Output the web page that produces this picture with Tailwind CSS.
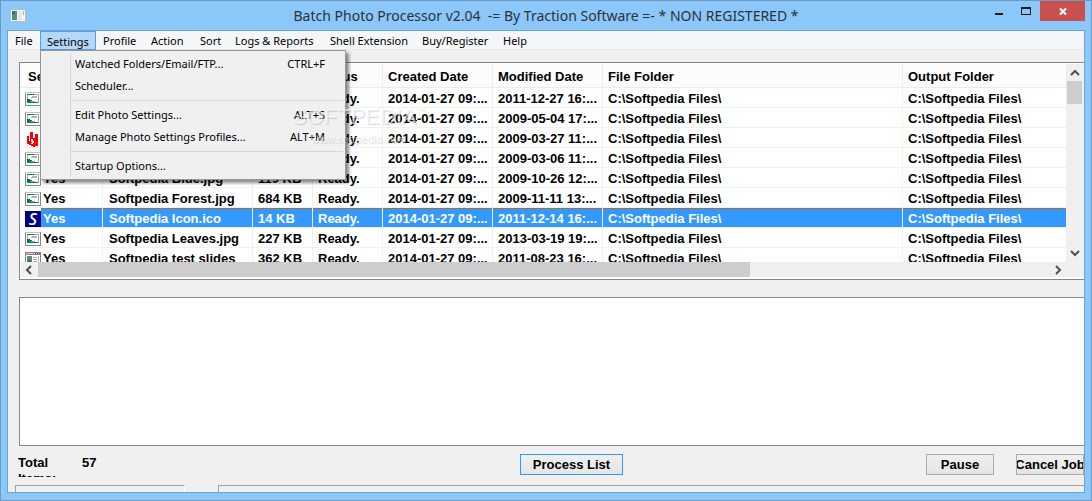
<!DOCTYPE html>
<html lang="en">
<head>
  <meta charset="UTF-8" />
  <meta name="viewport" content="width=device-width, initial-scale=1.0" />
  <title>Batch Photo Processor</title>
  <script src="https://cdn.jsdelivr.net/npm/@tailwindcss/browser@4"></script>
</head>
<body class="h-screen overflow-hidden bg-[#8cc7fa] font-['Noto_Sans',sans-serif] text-black">
  <div class="flex h-full flex-col border border-[#6b9ac3] px-[6px] pb-[7px]">
    <!-- title bar -->
    <header class="grid h-[29px] shrink-0 grid-cols-[1fr_auto_1fr] items-center">
      <svg class="ml-[3px] h-4 w-4" viewBox="0 0 16 16" shape-rendering="crispEdges">
        <path fill="#b8bcbe" d="M0 1h16v13H0z" />
        <path fill="#f4f6f7" d="M1 2h14v11H1z" />
        <path fill="#4d9684" d="M2 3h5v9H2z" />
        <path fill="#2f7488" d="M2 3h3v4H2z" />
        <path fill="#dfe9ea" d="M8 3h4v9H8z" />
        <path fill="#8fc1a4" d="M13 3h1v4h-1z" />
      </svg>
      <h1 class="text-[14px] whitespace-pre text-[#28323c]">Batch Photo Processor v2.04  -= By Traction Software =- * NON REGISTERED *</h1>
      <div class="flex justify-end self-start">
        <button aria-label="Minimize" class="h-5 w-[27px]"><svg class="h-5 w-[27px]" viewBox="0 0 27 20"><path fill="#1e1e1e" d="M9 12h8v2H9z" /></svg></button>
        <button aria-label="Maximize" class="h-5 w-[27px]"><svg class="h-5 w-[27px]" viewBox="0 0 27 20" shape-rendering="crispEdges"><path fill="#1e1e1e" fill-rule="evenodd" d="M8 6h10v8H8zM9 8v5h8V8z" /></svg></button>
        <button aria-label="Close" class="h-5 w-[45px] bg-[#c75050]"><svg class="h-5 w-[45px]" viewBox="0 0 45 20"><path fill="none" stroke="#fff" stroke-width="2" d="M20 7.500l6 6M26 7.500l-6 6" /></svg></button>
      </div>
    </header>

    <main class="relative flex min-h-0 flex-1 flex-col overflow-hidden border border-[#6ba3d6] bg-[#f0f0f0]">
      <!-- menu bar -->
      <nav class="relative z-10 flex h-[19px] shrink-0 border-b border-[#e8e8e8] bg-[#f5f6f7] text-[11px]">
        <button class="h-[19px] w-8 pt-[2px] pl-[7px] text-left whitespace-nowrap">File</button>
        <div class="relative">
          <button class="h-[19px] w-14 border border-[#569de5] bg-[#b5d7f8] pt-[2px] pl-[6px] text-left whitespace-nowrap">Settings</button>
          <ul class="absolute top-[19px] left-0 w-[306px] border border-[#979797] bg-[#f0f0f0] bg-[linear-gradient(#d7d7d7,#d7d7d7)] bg-[length:1px_calc(100%-4px)] bg-[position:29px_2px] bg-no-repeat py-[2px] shadow-[3px_3px_3px_rgba(0,0,0,0.45)]">
            <li><button class="flex h-[22px] w-full items-center justify-between pr-5 pl-[34px]"><span>Watched Folders/Email/FTP...</span><span>CTRL+F</span></button></li>
            <li><button class="flex h-[22px] w-full items-center justify-between pr-5 pl-[34px]"><span>Scheduler...</span></button></li>
            <li class="my-[3px] mr-[2px] ml-[30px] h-px bg-[#d7d7d7]"></li>
            <li><button class="flex h-[22px] w-full items-center justify-between pr-5 pl-[34px]"><span>Edit Photo Settings...</span><span>ALT+S</span></button></li>
            <li><button class="flex h-[22px] w-full items-center justify-between pr-5 pl-[34px]"><span>Manage Photo Settings Profiles...</span><span>ALT+M</span></button></li>
            <li class="my-[3px] mr-[2px] ml-[30px] h-px bg-[#d7d7d7]"></li>
            <li><button class="flex h-[22px] w-full items-center justify-between pr-5 pl-[34px]"><span>Startup Options...</span></button></li>
          </ul>
        </div>
        <button class="h-[19px] w-12 pt-[2px] pl-[7px] text-left whitespace-nowrap">Profile</button>
        <button class="h-[19px] w-12 pt-[2px] pl-[7px] text-left whitespace-nowrap">Action</button>
        <button class="h-[19px] w-9 pt-[2px] pl-[8px] text-left whitespace-nowrap">Sort</button>
        <button class="h-[19px] w-[95px] pt-[2px] pl-[7px] text-left whitespace-nowrap">Logs &amp; Reports</button>
        <button class="h-[19px] w-[92px] pt-[2px] pl-[7px] text-left whitespace-nowrap">Shell Extension</button>
        <button class="h-[19px] w-[81px] pt-[2px] pl-[7px] text-left whitespace-nowrap">Buy/Register</button>
        <button class="h-[19px] pt-[2px] pl-[7px] text-left whitespace-nowrap">Help</button>
      </nav>

      <!-- file list -->
      <section class="mt-3 ml-[11px] flex h-[218px] shrink-0 flex-col border border-r-0 border-[#828790] bg-white py-px pb-[2px] pl-px font-['Liberation_Sans',Arial,sans-serif] text-[13px] font-bold">
        <div class="flex min-h-0 flex-1">
          <div class="min-w-0 flex-1 overflow-hidden">
            <table class="w-full table-fixed border-separate border-spacing-0">
              <colgroup>
                <col class="w-[82px]" /><col class="w-[150px]" /><col class="w-[60px]" /><col class="w-[70px]" />
                <col class="w-[110px]" /><col class="w-[110px]" /><col class="w-[300px]" /><col />
              </colgroup>
              <thead>
                <tr class="h-6 bg-[#fcfcfc] text-left leading-4 *:border-r *:border-b *:border-[#e3ecf7] *:pt-[2px] *:pl-[5px]">
                  <th><span class="pl-[2px]">Selected</span></th><th>Name</th><th>Size</th><th>Status</th><th>Created Date</th><th>Modified Date</th><th>File Folder</th><th>Output Folder</th>
                </tr>
              </thead>
              <tbody id="rows"></tbody>
            </table>
          </div>
          <div class="flex w-[17px] shrink-0 flex-col bg-[#f0f0f0]">
            <svg class="h-[17px] w-4 shrink-0" viewBox="0 0 16 17"><path fill="none" stroke="#505050" stroke-width="2" d="M4 11l4-4 4 4" /></svg>
            <div class="h-[23px] w-[15px] bg-[#cdcdcd]"></div>
            <svg class="mt-auto h-[17px] w-4 shrink-0" viewBox="0 0 16 17"><path fill="none" stroke="#505050" stroke-width="2" d="M4 6l4 4 4-4" /></svg>
          </div>
        </div>
        <div class="flex h-[15px] shrink-0 bg-[#f0f0f0]">
          <svg class="h-[15px] w-[17px] shrink-0" viewBox="0 0 17 15"><path fill="none" stroke="#505050" stroke-width="2" d="M10 4L6 8l4 4" /></svg>
          <div class="w-[67%] bg-[#cdcdcd]"></div>
          <svg class="mr-[17px] ml-auto h-[15px] w-[17px] shrink-0" viewBox="0 0 17 15"><path fill="none" stroke="#505050" stroke-width="2" d="M6 4l4 4-4 4" /></svg>
        </div>
      </section>

      <!-- log -->
      <textarea aria-label="Log" class="mt-[17px] ml-[11px] block min-h-0 flex-1 resize-none border border-r-0 border-[#828790] bg-white"></textarea>

      <footer class="flex h-[39px] shrink-0 items-start font-['Liberation_Sans',Arial,sans-serif] text-[13px] font-bold">
        <div class="mt-[9px] ml-[10px] h-[22px] w-16 overflow-hidden leading-4">Total<br />Items:</div>
        <div class="mt-[9px] leading-4">57</div>
        <button class="mt-2 ml-auto h-[21px] w-[103px] border border-[#3399ff] bg-linear-to-b from-[#f0f0f0] to-[#e5e5e5]">Process List</button>
        <button class="mt-2 ml-[303px] h-[21px] w-[68px] border border-[#acacac] bg-linear-to-b from-[#f0f0f0] to-[#e5e5e5]">Pause</button>
        <button class="mt-2 ml-[22px] flex h-[21px] w-[68px] items-center justify-center overflow-hidden border border-[#acacac] bg-linear-to-b from-[#f0f0f0] to-[#e5e5e5] whitespace-nowrap">Cancel Job</button>
      </footer>
      <div class="flex h-[7px] shrink-0 pl-[7px]">
        <div class="w-[170px] border border-b-0 border-[#a0a0a0] border-r-white"></div>
        <div class="ml-[33px] flex-1 border-t border-l border-[#a0a0a0]"></div>
      </div>

      <!-- watermark over the list -->
      <div class="pointer-events-none absolute top-[74px] left-[284px] z-20 text-center font-['Liberation_Sans',Arial,sans-serif] text-white/60 [text-shadow:1px_1px_1px_rgba(0,0,0,0.15)]">
        <div class="flex items-start text-[22px] leading-6">SOFTPEDIA<span class="text-[8px] leading-3">™</span></div>
        <div class="text-[11px] leading-5">www.softpedia.com</div>
      </div>
    </main>
  </div>

  <script>
    const icons = {
      image: `<path fill="#868686" d="M0 1h16v14H0z"/><path fill="#c4c4c4" d="M0 1h15v1H0z"/><path fill="#fff" d="M1 2h14v12H1z"/>
        <path fill="#a8a8a8" d="M2 3h12v9H2z"/><path fill="#fff" d="M3 4h10v7H3z"/><path fill="#008080" d="M2 3h7v1H2z"/>
        <path fill="#b4b4b4" d="M7 5h5v1H7zM6 6h6v1H6z"/><path fill="#008080" d="M2 9h5v1h2v1h4v1H2z"/><path fill="#008000" d="M2 8h3v3H2z"/><path fill="#a0a0a0" d="M6 10h4v1H6z"/>`,
      red: '<path fill="#f00" d="M2 5h2v5h1V1h3v6h2V3h3v12h-3l-1 1-3-1-1-1-3-1z"/><path fill="#fff" d="M6 8h2v2h1v2l-2 1H6v-1l1-1H6z"/>',
      s: '<path fill="#000080" d="M0 0h16v16H0z"/><text x="8" y="14" text-anchor="middle" fill="#fff" font-family="Open Sans" font-size="16" font-weight="600" font-style="italic">S</text>',
      window: `<path fill="#868686" d="M0 1h16v15H0z"/><path fill="#c4c4c4" d="M1 2h14v1H1z"/><path fill="#505050" d="M10 2h1v1h-1zM12 2h1v1h-1zM14 2h1v1h-1z"/>
        <path fill="#fff" d="M1 4h14v12H1z"/><path fill="#808080" d="M2 5h5v7H2z"/><path fill="#008080" d="M3 9h3v2H3z"/><path fill="#b0b0b0" d="M8 6h4v1H8zM8 8h4v1H8zM8 10h4v1H8zM13 5h1v9h-1z"/>`
    };
    const files = [
      ['image', 'Softpedia Abstract.jpg', '210 KB', '2011-12-27 16:...'],
      ['image', 'Softpedia Animal.jpg', '152 KB', '2009-05-04 17:...'],
      ['red', 'Softpedia Archive.psd', '98 KB', '2009-03-27 11:...'],
      ['image', 'Softpedia Beach.jpg', '305 KB', '2009-03-06 11:...'],
      ['image', 'Softpedia Blue.jpg', '119 KB', '2009-10-26 12:...'],
      ['image', 'Softpedia Forest.jpg', '684 KB', '2009-11-11 13:...'],
      ['s', 'Softpedia Icon.ico', '14 KB', '2011-12-14 16:...'],
      ['image', 'Softpedia Leaves.jpg', '227 KB', '2013-03-19 19:...'],
      ['window', 'Softpedia test slides', '362 KB', '2011-08-23 16:...']
    ];
    document.getElementById('rows').innerHTML = files.map(([icon, name, size, modified]) => {
      const cells = [size, 'Ready.', '2014-01-27 09:...', modified, 'C:\\Softpedia Files\\', 'C:\\Softpedia Files\\'];
      const look = icon === 's' ? 'bg-[#3399ff] text-white *:bg-[repeating-linear-gradient(90deg,#c86400_0_1px,#8a7a60_1px_2px)] *:bg-[length:100%_1px] *:bg-no-repeat' : '';
      return `<tr class="h-5 leading-[17px] *:h-5 *:border-r *:border-b *:border-[#f0f0f0] ${look}">
        <td><span class="flex h-[19px] items-center bg-[linear-gradient(#fff,#fff)] bg-[length:20px_100%] bg-no-repeat pt-[2px]"><svg class="ml-1 h-4 w-4 shrink-0" viewBox="0 0 16 16" shape-rendering="crispEdges">${icons[icon]}</svg><span class="pl-[2px]">Yes</span></span></td>
        <td class="truncate pt-[2px] pl-[6px]">${name}</td>
        ${cells.map(c => `<td class="truncate pt-[2px] pl-[5px]">${c}</td>`).join('')}
      </tr>`;
    }).join('');
  </script>
</body>
</html>
